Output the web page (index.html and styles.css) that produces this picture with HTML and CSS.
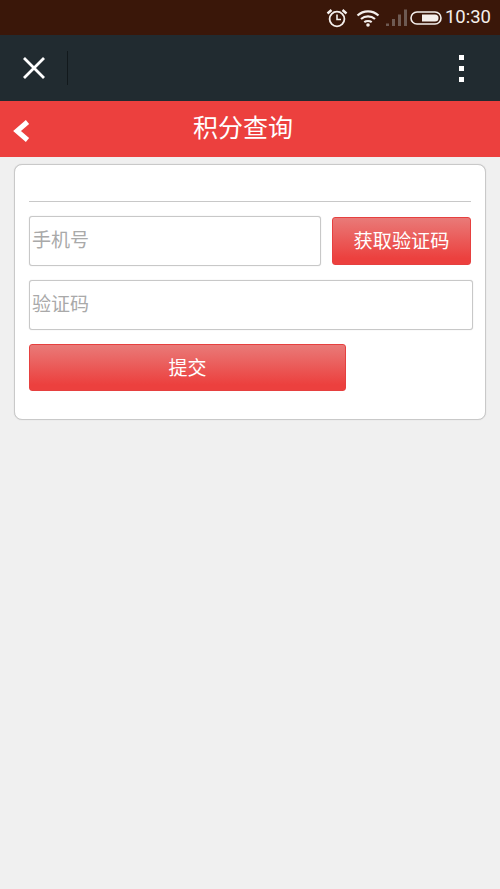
FILE: index.html
```html
<!DOCTYPE html>
<html lang="zh-CN">
<head>
<meta charset="utf-8">
<title>积分查询</title>
<link rel="stylesheet" href="styles.css">
</head>
<body>
<div class="status">
  <svg class="ic-alarm" viewBox="0 0 22 20" width="22" height="20"><circle cx="11" cy="11" r="7.400" fill="none" stroke="#f4efec" stroke-width="1.800"/><path d="M11 6.500V11.500H15" fill="none" stroke="#f4efec" stroke-width="1.600"/><path d="M1.500 5.500L5.500 2M20.500 5.500L16.500 2" stroke="#f4efec" stroke-width="2.400" fill="none"/></svg>
  <svg class="ic-wifi" viewBox="0 0 24 18" width="24" height="18"><path d="M1.500 6.500C7.500 1 16.500 1 22.500 6.500M5 10C9 6.500 15 6.500 19 10M8.300 13.200C10.300 11.700 13.700 11.700 15.700 13.200" fill="none" stroke="#f4efec" stroke-width="2.200"/><circle cx="12" cy="16" r="1.800" fill="#f4efec"/></svg>
  <svg class="ic-signal" viewBox="0 0 21 18" width="21" height="18"><rect x="0" y="14.500" width="3" height="2.500" fill="#6e5a52"/><rect x="6" y="10" width="3" height="7" fill="#6e5a52"/><rect x="12" y="5.500" width="3" height="11.500" fill="#6e5a52"/><rect x="18" y="0.500" width="3" height="16.500" fill="#6e5a52"/></svg>
  <svg class="ic-batt" viewBox="0 0 32 14" width="32" height="14"><rect x="1" y="1" width="30" height="12" rx="6" fill="none" stroke="#f4efec" stroke-width="1.600"/><path d="M12 3.500H25a3.500 3.500 0 0 1 0 7H12z" fill="#f4efec"/></svg>
  <span class="clock">10:30</span>
</div>
<div class="nav">
  <svg class="ic-close" viewBox="0 0 24 24" width="24" height="24"><path d="M2 2L22 22M22 2L2 22" stroke="#fff" stroke-width="2.800" fill="none"/></svg>
  <div class="nav-sep"></div>
  <div class="dots"><i></i><i></i><i></i></div>
</div>
<header class="title-bar">
  <svg class="ic-back" viewBox="0 0 18 24" width="18" height="24"><path d="M15.500 3L5 12L15.500 21" fill="none" stroke="#fff" stroke-width="5"/></svg>
  <h1>积分查询</h1>
</header>
<main class="card">
  <hr class="rule">
  <div class="row">
    <div class="field field-phone">手机号</div>
    <button class="btn btn-code">获取验证码</button>
  </div>
  <div class="field field-code">验证码</div>
  <button class="btn btn-submit">提交</button>
</main>
</body>
</html>
```
FILE: styles.css
```css
* { box-sizing: border-box; }
html, body { margin: 0; height: 100%; }
body {
  background: #f0f0f0;
  font-family: "Roboto", "Noto Sans CJK SC", sans-serif;
  overflow: hidden;
}
.status {
  height: 35px;
  background: #3a1709;
  display: flex;
  align-items: center;
  justify-content: flex-end;
  padding-right: 9px;
  color: #f4efec;
}
.ic-alarm { margin-right: 8px; }
.ic-wifi { margin-right: 6px; }
.ic-signal { margin-right: 3px; }
.ic-batt { margin-right: 3px; }
.clock { font-size: 18.500px; line-height: 35px; }
.nav {
  height: 66px;
  background: #212b30;
  display: flex;
  align-items: center;
  padding: 0 36px 0 22px;
}
.ic-close { display: block; }
.nav-sep { width: 1px; height: 34px; background: #12191c; margin-left: 21px; }
.dots { margin-left: auto; display: flex; flex-direction: column; gap: 6px; }
.dots i { display: block; width: 5px; height: 5px; background: #fff; }
.title-bar {
  height: 56px;
  background: #ec403e;
  position: relative;
  display: flex;
  align-items: center;
  justify-content: center;
  padding-right: 14px;
}
.ic-back { position: absolute; left: 12px; top: 18px; }
.title-bar h1 {
  margin: 0;
  color: #fff;
  font-size: 25px;
  font-weight: 400;
  line-height: 54px;
}
.card {
  margin: 7px 14px 0;
  height: 256px;
  background: #fff;
  border: 1px solid #c9c9c9;
  border-radius: 8px;
  box-shadow: 0 0 1px #c9c9c9;
  padding: 36px 14px 0;
}
.rule { margin: 0 0 14px; border: 0; height: 1px; background: #c8c8c8; }
.row { display: flex; justify-content: space-between; align-items: center; }
.field {
  height: 50px;
  background: #fff;
  border: 1px solid #c8c8c8;
  border-radius: 3px;
  box-shadow: 0 0 1px #c8c8c8;
  padding-left: 2px;
  color: #a9a9a9;
  font-size: 19px;
  line-height: 48px;
}
.field-phone { width: 292px; }
.field-code { width: 444px; margin-top: 14px; }
.btn {
  display: block;
  padding: 0 0 2px;
  border: 1px solid #e6403f;
  border-radius: 3px;
  background: linear-gradient(#e97a78, #ec403e 88%);
  color: #fff;
  font-family: inherit;
}
.btn-code { width: 139px; height: 48px; font-size: 19.200px; }
.btn-submit { width: 317px; height: 47px; margin-top: 14px; font-size: 19px; }
```
